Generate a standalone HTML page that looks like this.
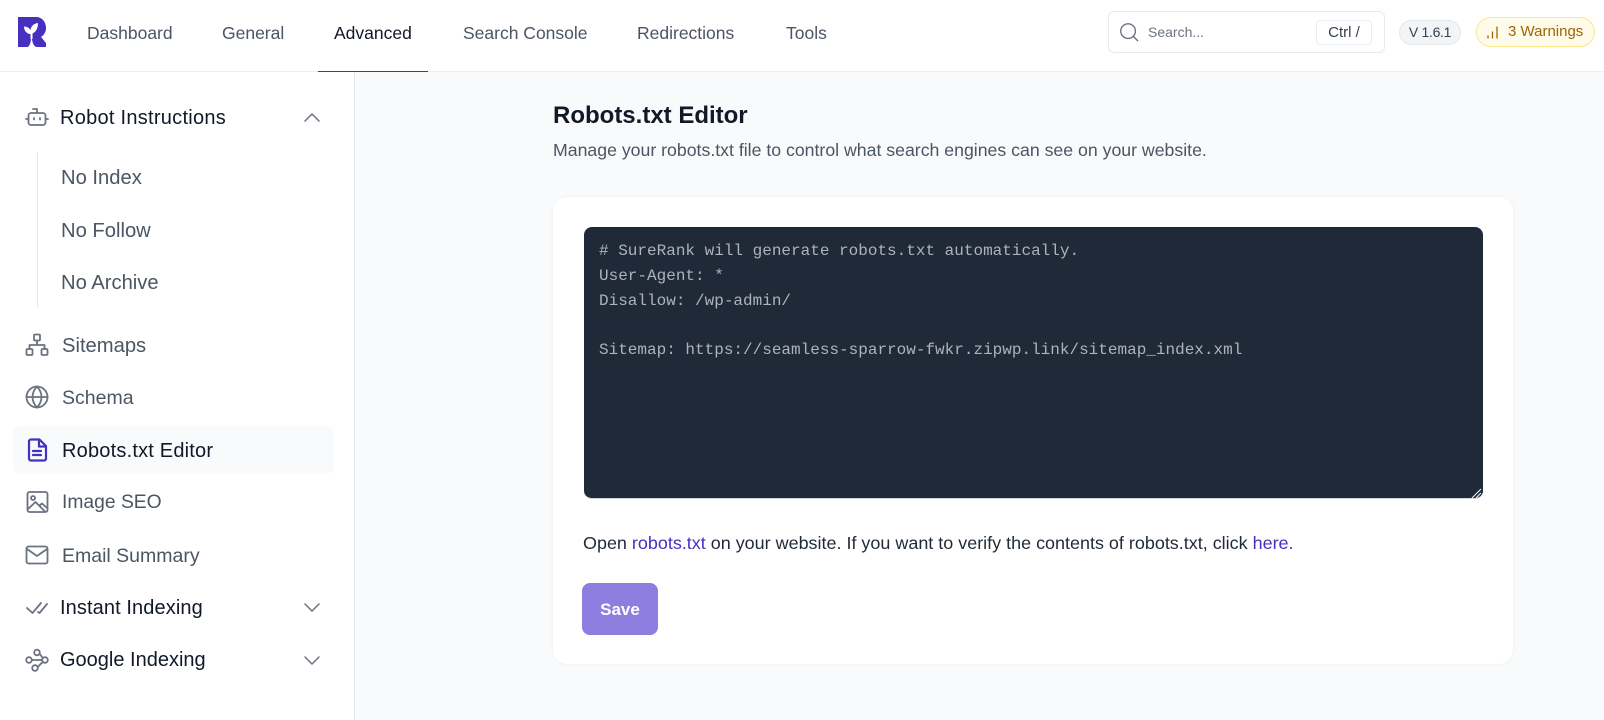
<!DOCTYPE html>
<html lang="en"><head><meta charset="utf-8"><title>Robots.txt Editor</title>
<style>
*{box-sizing:border-box}
html,body{margin:0;padding:0;width:1604px;height:720px;overflow:hidden;background:#f9fafb;font-family:"Liberation Sans",sans-serif}
.a{position:absolute}
.t{position:absolute;white-space:nowrap;line-height:24px;height:24px;font-size:17.5px;color:#4b5563}
.g{font-size:19.500px}
.n{font-size:20.200px}
.d{color:#111827}
.h{font-size:20px;letter-spacing:.1px}
svg.i{position:absolute;width:24px;height:24px;fill:none;stroke:#6b7280;stroke-width:1.800;stroke-linecap:round;stroke-linejoin:round}
</style></head><body>
<div class="a" style="left:0;top:0;width:1604px;height:72px;background:#fff;border-bottom:1px solid #eceef1"></div>
<div class="a" style="left:0;top:72px;width:355px;height:648px;background:#fff;border-right:1px solid #e5e7eb"></div>

<svg class="a" style="left:18px;top:17px" width="28" height="30" viewBox="0 0 28 30"><path fill="#4530c0" d="M0 0H18C24 0 28 5 28 11C28 15 26 18 23 20L28 26V30H19C16.500 30 14.500 27 14 22H13C12.500 27 11 30 9 30H0Z"/><path fill="#fff" d="M12.500 17C8.500 17 6 13.500 6 9.500C9 9.500 11.500 11 12.500 13C13 9.500 15.500 6.500 20 6C20 11 18 15 14.500 16.500V22H12.500Z"/></svg>

<div class="t" style="left:87px;top:21px">Dashboard</div>
<div class="t" style="left:222px;top:21px">General</div>
<div class="t d" style="left:334px;top:21px">Advanced</div>
<div class="t" style="left:463px;top:21px">Search Console</div>
<div class="t" style="left:637px;top:21px">Redirections</div>
<div class="t" style="left:786px;top:21px">Tools</div>
<div class="a" style="left:318px;top:71px;width:110px;height:1px;background:#4530c0"></div>

<div class="a" style="left:1108px;top:11px;width:277px;height:42px;border:1px solid #e8eaee;border-radius:6px;background:#fff"></div>
<svg class="i" style="left:1118px;top:21px;width:22px;height:22px;stroke-width:1.500" viewBox="0 0 24 24"><circle cx="11" cy="11" r="8"/><path d="M17 17L21.500 21.500"/></svg>
<div class="t" style="left:1148px;top:20px;font-size:14px;color:#6b7280">Search...</div>
<div class="a" style="left:1316px;top:20px;width:56px;height:25px;border:1px solid #eceef1;border-radius:4px;background:#fff;color:#374151;font-size:15px;line-height:23px;text-align:center">Ctrl /</div>
<div class="a" style="left:1399px;top:20px;width:62px;height:25px;border:1px solid #e5e7eb;border-radius:13px;background:#f3f4f6;color:#374151;font-size:14px;letter-spacing:-.3px;line-height:23px;text-align:center">V 1.6.1</div>
<div class="a" style="left:1476px;top:17px;width:119px;height:30px;border:1px solid #fde68a;border-radius:15px;background:#fefce8"></div>
<svg class="a" style="left:1486px;top:25px" width="14" height="15" fill="none" stroke="#a16207" stroke-width="1.300" stroke-linecap="round"><path d="M2 13V11M6.500 13V7M11 13V2"/></svg>
<div class="t" style="left:1508px;top:20px;font-size:15px;color:#a16207">3 Warnings</div>

<svg class="i" style="left:25px;top:105px" viewBox="0 0 24 24"><rect x="3.500" y="8" width="17" height="12" rx="2.500"/><path d="M12 8V4H8M1 14H3.500M20.500 14H23M9 13V14.500M15 13V14.500"/></svg>
<div class="t d h" style="left:60px;top:106px;letter-spacing:.27px">Robot Instructions</div>
<svg class="i" style="left:300px;top:106px;stroke-width:1.500" viewBox="0 0 24 24"><path d="M5 15L12 8L19 15"/></svg>
<div class="a" style="left:37px;top:152px;width:1px;height:155px;background:#e5e7eb"></div>
<div class="t n" style="left:61px;top:166px">No Index</div>
<div class="t n" style="left:61px;top:219px">No Follow</div>
<div class="t n" style="left:61px;top:271px">No Archive</div>

<svg class="i" style="left:25px;top:333px" viewBox="0 0 24 24"><rect x="9" y="1.500" width="6" height="6" rx="1"/><rect x="1.500" y="16" width="6" height="6" rx="1"/><rect x="16.500" y="16" width="6" height="6" rx="1"/><path d="M12 7.500V12M4.500 16V12H19.500V16"/></svg>
<div class="t n" style="left:62px;top:334px">Sitemaps</div>
<svg class="i" style="left:25px;top:385px" viewBox="0 0 24 24"><circle cx="12" cy="12" r="10.500"/><path d="M1.500 12H22.500M12 1.500C6 8 6 16 12 22.500C18 16 18 8 12 1.500Z"/></svg>
<div class="t g" style="left:62px;top:386px">Schema</div>
<div class="a" style="left:13px;top:426px;width:321px;height:48px;border-radius:8px;background:#f9fafb"></div>
<svg class="i" style="left:25px;top:438px;stroke:#4530c0;stroke-width:2.200" viewBox="0 0 24 24"><path d="M4 3.500A2 2 0 0 1 6 1.500H14.500L21 8V20.500A2 2 0 0 1 19 22.500H6A2 2 0 0 1 4 20.500ZM14 2V8.500H20.500M8 13H16M8 17H16"/></svg>
<div class="t d h" style="left:62px;top:439px;letter-spacing:.2px">Robots.txt Editor</div>
<svg class="i" style="left:25px;top:490px" viewBox="0 0 24 24"><rect x="2.500" y="2" width="20" height="20" rx="2"/><circle cx="8" cy="8" r="2"/><path d="M3 19L10.500 12L20 21.500M14.500 15.500L17 13.500L22 18"/></svg>
<div class="t" style="left:62px;top:491px;font-size:19.300px">Image SEO</div>
<svg class="i" style="left:25px;top:543px" viewBox="0 0 24 24"><rect x="1.500" y="3.500" width="21" height="17" rx="2"/><path d="M2 6L12 13L22 6"/></svg>
<div class="t g" style="left:62px;top:544px">Email Summary</div>
<svg class="i" style="left:25px;top:595px" viewBox="0 0 24 24"><path d="M2 13L7.500 18L16 8M13 17L14.500 18L22 9"/></svg>
<div class="t d h" style="left:60px;top:596px">Instant Indexing</div>
<svg class="i" style="left:300px;top:595px;stroke-width:1.500" viewBox="0 0 24 24"><path d="M5 9L12 16L19 9"/></svg>
<svg class="i" style="left:25px;top:648px" viewBox="0 0 24 24"><circle cx="12" cy="4.500" r="2.800"/><circle cx="4" cy="12" r="2.800"/><circle cx="20" cy="12" r="2.800"/><circle cx="10" cy="20" r="2.800"/><path d="M14.500 5.500L17 9M6.800 12H17.200M18 14C15 16 14 18 12.800 19"/></svg>
<div class="t d h" style="left:60px;top:648px;letter-spacing:0">Google Indexing</div>
<svg class="i" style="left:300px;top:648px;stroke-width:1.500" viewBox="0 0 24 24"><path d="M5 9L12 16L19 9"/></svg>

<div class="t" style="left:553px;top:101px;height:30px;line-height:30px;font-size:24px;font-weight:700;color:#111827">Robots.txt Editor</div>
<div class="t" style="left:553px;top:138px;font-size:17.700px">Manage your robots.txt file to control what search engines can see on your website.</div>

<div class="a" style="left:553px;top:197px;width:960px;height:467px;background:#fff;border-radius:14px;box-shadow:0 0 3px rgba(17,24,39,.06)"></div>
<div class="a" style="left:584px;top:227px;width:899px;height:272px;background:#1f2937;border-radius:8px;border-bottom:1px solid #d1d5db"></div>
<pre class="a" style="left:599px;top:239px;margin:0;font-family:'Liberation Mono',monospace;font-size:16px;line-height:24.800px;color:#adb3bc">
# SureRank will generate robots.txt automatically.
User-Agent: *
Disallow: /wp-admin/

Sitemap: https://seamless-sparrow-fwkr.zipwp.link/sitemap_index.xml</pre>
<svg class="a" style="left:1471px;top:488px" width="11" height="11"><path d="M1 10L10 1" stroke="#e5e7eb" stroke-width="1.200"/><path d="M5 10L10 5" stroke="#e5e7eb" stroke-width="1.200"/></svg>

<div class="t" style="left:583px;top:531px;font-size:17.970px;color:#1f2937">Open <span style="color:#4530c0">robots.txt</span> on your website. If you want to verify the contents of robots.txt, click <span style="color:#4530c0">here.</span></div>
<div class="a" style="left:582px;top:583px;width:76px;height:52px;border-radius:8px;background:#8e7ee0;color:#fff;font-size:17px;font-weight:700;line-height:54px;text-align:center">Save</div>
</body></html>
